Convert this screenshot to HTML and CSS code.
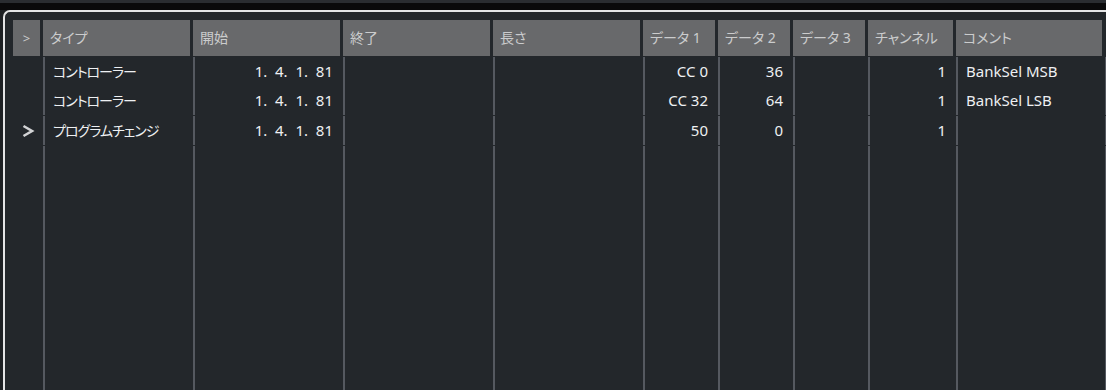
FILE: index.html
```html
<!DOCTYPE html>
<html lang="ja">
  <head>
    <meta charset="UTF-8" />
    <title>List Editor</title>
    <link rel="stylesheet" href="styles.css">
  </head>
  <body>
    <div class="top-strip"></div>
    <div class="black-strip"></div>

    <div class="frame">
      <!-- Column header -->
      <div class="list-row header">
        <div class="hcell center">&gt;</div>
        <div class="hcell">タイプ</div>
        <div class="hcell">開始</div>
        <div class="hcell">終了</div>
        <div class="hcell">長さ</div>
        <div class="hcell">データ 1</div>
        <div class="hcell">データ 2</div>
        <div class="hcell">データ 3</div>
        <div class="hcell">チャンネル</div>
        <div class="hcell">コメント</div>
        <div class="hcell blank"></div>
      </div>

      <!-- Events -->
      <div class="list-row">
        <div class="cell marker"></div>
        <div class="cell jp">コントローラー</div>
        <div class="cell num">1.  4.  1.  81</div>
        <div class="cell"></div>
        <div class="cell"></div>
        <div class="cell num">CC 0</div>
        <div class="cell num">36</div>
        <div class="cell"></div>
        <div class="cell num">1</div>
        <div class="cell">BankSel MSB</div>
        <div class="cell"></div>
      </div>
      <div class="list-row">
        <div class="cell marker"></div>
        <div class="cell jp">コントローラー</div>
        <div class="cell num">1.  4.  1.  81</div>
        <div class="cell"></div>
        <div class="cell"></div>
        <div class="cell num">CC 32</div>
        <div class="cell num">64</div>
        <div class="cell"></div>
        <div class="cell num">1</div>
        <div class="cell">BankSel LSB</div>
        <div class="cell"></div>
      </div>
      <div class="list-row current">
        <div class="cell marker">
          <svg width="14" height="14" viewBox="0 0 14 14">
            <polyline points="2.5,2 11,7 2.5,12" fill="none" stroke="#d2d3d5" stroke-width="2.6" stroke-linejoin="miter" />
          </svg>
        </div>
        <div class="cell jp">プログラムチェンジ</div>
        <div class="cell num">1.  4.  1.  81</div>
        <div class="cell"></div>
        <div class="cell"></div>
        <div class="cell num">50</div>
        <div class="cell num">0</div>
        <div class="cell"></div>
        <div class="cell num">1</div>
        <div class="cell"></div>
        <div class="cell"></div>
      </div>

      <!-- empty space below the last event -->
      <div class="list-row filler">
        <div class="cell marker"></div>
        <div class="cell"></div>
        <div class="cell"></div>
        <div class="cell"></div>
        <div class="cell"></div>
        <div class="cell"></div>
        <div class="cell"></div>
        <div class="cell"></div>
        <div class="cell"></div>
        <div class="cell"></div>
        <div class="cell"></div>
      </div>
    </div>
  </body>
</html>
```

FILE: styles.css
```css
/* General Reset */
* {
  margin: 0;
  padding: 0;
  box-sizing: border-box;
}

body,
html {
  height: 100%;
  overflow: hidden;
}

body {
  display: flex;
  flex-direction: column;
  background: #1d2023;
  font-family: "Noto Sans", "Noto Sans CJK JP", sans-serif;
  font-size: 14px;
  font-feature-settings: "palt";
}

/* Window edge above the editor */
.top-strip {
  height: 3px;
  background: #2a2d31;
}

.black-strip {
  height: 7px;
  background: #0a0a0b;
}

/* Editor frame */
.frame {
  flex: 1;
  display: flex;
  flex-direction: column;
  margin-left: 3px;
  padding: 8px 0 0 8px;
  background: #23272b;
  border-top: 2px solid #e4e5e6;
  border-left: 2px solid #e4e5e6;
  border-top-left-radius: 7px;
}

/* Shared column grid */
.list-row {
  display: grid;
  grid-template-columns: 27px 147px 147px 147px 147px 72px 72px 72px 85px 146px 40px;
  column-gap: 3px;
  height: 29px;
}

.list-row.header {
  height: 36px;
  margin-bottom: 1px;
}

.hcell {
  background: #68696b;
  color: #cbcccd;
  line-height: 36px;
  padding-left: 7px;
  white-space: nowrap;
}

.hcell.center {
  padding-left: 0;
  text-align: center;
  font-size: 13px;
}

.hcell.blank {
  background: transparent;
}

.cell {
  border-left: 2px solid #555960;
  color: #eef0f2;
  font-size: 15px;
  line-height: 29px;
  padding-left: 8px;
  white-space: pre;
  overflow: hidden;
}

.cell.jp {
  font-size: 14px;
  letter-spacing: -1px;
}

.cell.num {
  text-align: right;
  padding-left: 0;
  padding-right: 7px;
}

.cell.marker {
  border-left: none;
  display: flex;
  align-items: center;
  padding-left: 8px;
}

.list-row.current {
  margin: 1px 0;
}

.list-row.filler {
  flex: 1;
  height: auto;
}
```
